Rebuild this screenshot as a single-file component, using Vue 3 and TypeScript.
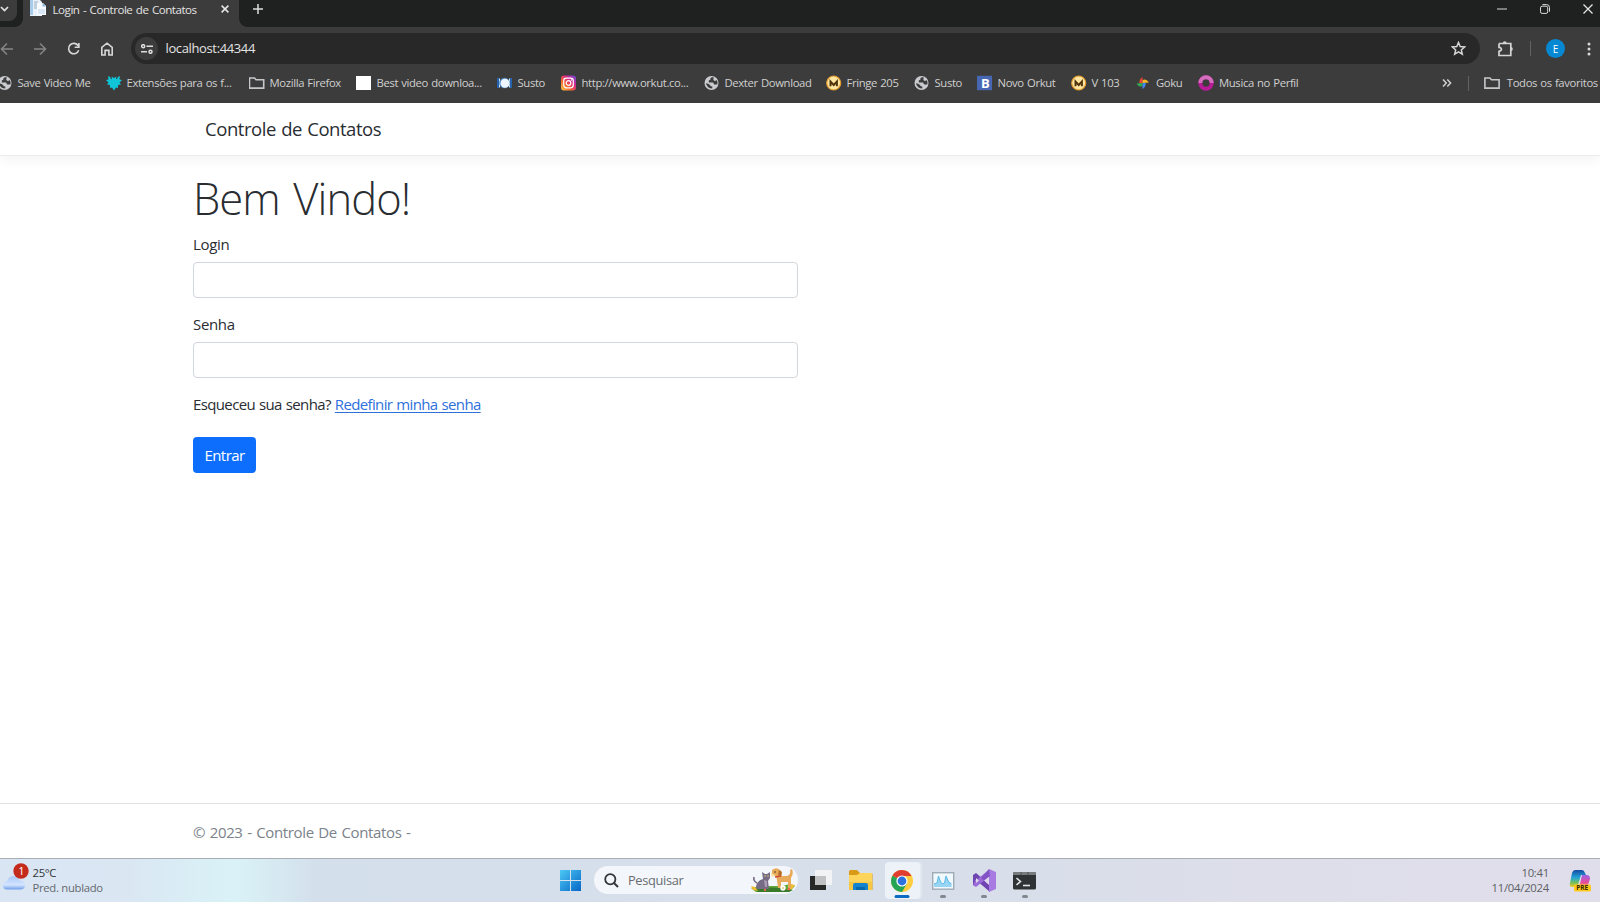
<script setup lang="ts">
interface Bookmark {
  label: string
  icon: string
  width: number
}

const bookmarks: Bookmark[] = [
  { label: 'Save Video Me', icon: 'globe', width: 109 },
  { label: 'Extensões para os f...', icon: 'puzzle', width: 143 },
  { label: 'Mozilla Firefox', icon: 'folder', width: 107 },
  { label: 'Best video downloa...', icon: 'blank', width: 141 },
  { label: 'Susto', icon: 'shake', width: 64 },
  { label: 'http://www.orkut.co...', icon: 'insta', width: 143 },
  { label: 'Dexter Download', icon: 'globe', width: 122 },
  { label: 'Fringe 205', icon: 'gold', width: 88 },
  { label: 'Susto', icon: 'globe', width: 63 },
  { label: 'Novo Orkut', icon: 'letter', width: 94 },
  { label: 'V 103', icon: 'gold', width: 64.5 },
  { label: 'Goku', icon: 'photos', width: 63 },
  { label: 'Musica no Perfil', icon: 'ring', width: 119.5 },
]
</script>

<template>
  <div class="screen">
    <header class="tabs">
      <div class="tab-search">
        <svg width="9" height="6" viewBox="0 0 9 6"><path d="M1 1l3.500 3.600L8 1" fill="none" stroke="#e3e3e3" stroke-width="1.700" /></svg>
      </div>
      <div class="tab">
        <svg class="favicon" width="16" height="16" viewBox="0 0 16 16">
          <path d="M0 0h10l2 2v14H0z" fill="#e9f2fa" /><path d="M0 0h3v15H0z" fill="#a7cbe9" />
          <path d="M4 2h4M4 4h4M4 6h3M4 8h3" stroke="#9aaec0" />
          <path d="M7 3h6l3 3v9H7z" fill="#f8fbff" /><path d="M8 9h7v5H8z" fill="#dae8f5" /><path d="M12.500 3l3.500 3.500h-3.500z" fill="#8ab8df" />
        </svg>
        <span class="tab-title">Login - Controle de Contatos</span>
        <svg class="tab-close" width="8" height="8" viewBox="0 0 8 8"><path d="M.6.6l6.800 6.800M7.400.6L.6 7.400" stroke="#e8e8e8" stroke-width="1.500" /></svg>
      </div>
      <svg class="plus" width="10" height="10" viewBox="0 0 10 10"><path d="M5 0v10M0 5h10" stroke="#dcdcdc" stroke-width="1.500" /></svg>
      <div class="window-buttons">
        <svg width="10" height="10" viewBox="0 0 10 10"><path d="M0 5h10" stroke="#d8d8d8" /></svg>
        <svg width="10" height="10" viewBox="0 0 10 10" fill="none" stroke="#d8d8d8"><rect x=".5" y="2.200" width="7.200" height="7.200" rx="1.600" /><path d="M2.400.6h4.200q2.900 0 2.900 2.900v4.200" /></svg>
        <svg width="10" height="10" viewBox="0 0 10 10"><path d="M.5.5l9 9M9.500.5l-9 9" stroke="#e8e8e8" stroke-width="1.200" /></svg>
      </div>
    </header>

    <div class="toolbar">
      <svg class="nav-icon dim" width="14" height="14" viewBox="0 0 14 14"><path d="M13 7H2M7 1.500L1.500 7 7 12.500" /></svg>
      <svg class="nav-icon dim" width="14" height="14" viewBox="0 0 14 14"><path d="M1 7h11M7 1.500L12.500 7 7 12.500" /></svg>
      <svg class="nav-icon" width="14" height="14" viewBox="0 0 14 14"><path d="M11.200 3.800A5.200 5.200 0 1 0 11.700 8.300M11.900 1v4.200H7.700" /></svg>
      <svg class="nav-icon" width="14" height="14" viewBox="0 0 14 14"><path d="M1.800 13V5.300L7 1.200l5.200 4.100V13H8.900V8.400H5.100V13z" /></svg>
      <div class="omnibox">
        <span class="site-info">
          <svg width="12" height="10" viewBox="0 0 12 10" fill="none" stroke="#dedede" stroke-width="1.500"><circle cx="2.200" cy="2.200" r="1.500" /><path d="M5.500 2.200H12M0 7.800h6" /><circle cx="9.500" cy="7.800" r="1.500" /></svg>
        </span>
        <span class="url">localhost:44344</span>
        <svg class="star" width="15" height="15" viewBox="0 0 15 15"><path d="M7.500 1.500l1.700 4.100 4.400.4-3.300 2.900 1 4.300-3.800-2.300-3.800 2.300 1-4.300L1.400 6l4.400-.4z" fill="none" stroke="#d5d5d5" stroke-width="1.500" /></svg>
      </div>
      <svg class="ext" width="17" height="17" viewBox="0 0 17 17"><path d="M2 3.500h11.800v4M13.800 10v5.500H2v-4.200q2.400-.4 2.400-2T2 7.400V3.500M13.800 7v4" fill="none" stroke="#d5d5d5" stroke-width="1.700" /><path d="M5.700 3.500a2 2.300 0 0 1 4 0zM13.800 7a2 2 0 0 1 0 4z" fill="#d5d5d5" /></svg>
      <span class="bar-divider"></span>
      <span class="avatar">E</span>
      <svg class="menu" width="4" height="14" viewBox="0 0 4 14" fill="#d8d8d8"><circle cx="2" cy="2" r="1.500" /><circle cx="2" cy="7" r="1.500" /><circle cx="2" cy="12" r="1.500" /></svg>
    </div>

    <div class="bookmarks">
      <div v-for="(mark, i) in bookmarks" :key="i" class="bookmark" :style="{ width: mark.width + 'px' }">
        <svg width="16" height="16" viewBox="0 0 16 16">
          <template v-if="mark.icon === 'globe'">
            <circle cx="7.500" cy="8" r="7" fill="#c9cbce" />
            <path d="M8.300 2.200q-2.400.4-1.800 2.400l-1.700 1v2h4.300l1 1.800h3.300q.7-2.500-.8-4.500-1.400 1.800-2.700.7Q8.500 4.500 10 2.600M1.900 8.300q2.500.1 4.100 1.600.4 1.600 2.300 1.700v1.700q-4.800.7-6.400-5z" fill="#3c3c3c" />
          </template>
          <path v-else-if="mark.icon === 'puzzle'" d="M2 1l2 1 1 2h1l-.5-2.500L8 3l2.500-1.500L10 4h1l1-2 2-1-.5 3.500L16 5l-2.500 2.500 1.500 2-3 .5v3l-2-.5-2 3-2-3-2 .5v-3l-3-.5 1.500-2L0 5l2.500-.5z" fill="#10c5d8" />
          <path v-else-if="mark.icon === 'folder'" d="M.3 3h5l1.600 1.800h7.600v8.300H.3z" fill="none" stroke="#c5c7ca" stroke-width="1.600" class="folder-shape" />
          <path v-else-if="mark.icon === 'blank'" d="M0 1h15v14H0z" fill="#fff" />
          <template v-else-if="mark.icon === 'shake'">
            <path d="M0 3h2v10H0zM13 3h2v10h-2z" fill="#2862ac" /><path d="M2.500 3.500v9M12.500 3.500v9" stroke="#cde2f6" />
            <circle cx="7.500" cy="8" r="5.300" fill="#4d8bc9" /><circle cx="8" cy="8.300" r="4.500" fill="#eef7ff" />
          </template>
          <template v-else-if="mark.icon === 'insta'">
            <defs>
              <linearGradient id="ig" x1="0" y1="1" x2="1" y2="0"><stop offset="0" stop-color="#ffd24b" /><stop offset=".35" stop-color="#f4652e" /><stop offset=".65" stop-color="#d6278b" /><stop offset="1" stop-color="#614cda" /></linearGradient>
            </defs>
            <rect y=".5" width="15" height="15" rx="3" fill="url(#ig)" /><rect x="2.700" y="3.200" width="9.600" height="9.600" rx="2.700" fill="none" stroke="#fff" stroke-width="1.200" /><circle cx="7.500" cy="8" r="2.300" fill="none" stroke="#fff" stroke-width="1.200" /><circle cx="10.500" cy="5" r=".7" fill="#fff" />
          </template>
          <template v-else-if="mark.icon === 'gold'">
            <circle cx="7.700" cy="8" r="7" fill="#ffe6a0" stroke="#e59b2c" stroke-width="1.200" /><path d="M4.500 11.200V6.500L7.700 10l3.200-3.500v4.700" fill="none" stroke="#51340d" stroke-width="2" />
          </template>
          <template v-else-if="mark.icon === 'letter'">
            <path d="M0 .8h15v14.400H0z" fill="#4867b2" /><text x="4" y="13" class="icon-letter">B</text>
          </template>
          <template v-else-if="mark.icon === 'photos'">
            <path d="M7.500 2v6H4.200Q4.200 4 7.500 2z" fill="#e84435" /><path d="M14 7.500Q11 3 7.500 5V8z" fill="#f2b526" /><path d="M7.500 14V8h3.300q0 4-3.300 6z" fill="#4285f4" /><path d="M1.500 8.500Q4 13 7.500 11V8z" fill="#34a853" />
          </template>
          <template v-else>
            <circle cx="8" cy="8" r="5.700" fill="none" stroke="#b91a98" stroke-width="4" /><path d="M2.300 8a5.700 5.700 0 0 1 11.400 0" fill="none" stroke="#d46dbd" stroke-width="4" />
          </template>
        </svg>
        <span>{{ mark.label }}</span>
      </div>
      <svg class="more" width="10" height="8" viewBox="0 0 10 8"><path d="M1 .5L4.300 4 1 7.500M5.300.5L8.600 4 5.300 7.500" fill="none" stroke="#d0d0d0" stroke-width="1.500" /></svg>
      <span class="bar-divider bookmark-divider"></span>
      <svg width="16" height="16" viewBox="0 0 16 16"><path d="M.9 3h5l1.600 1.800h7.600v8.300H.9z" fill="none" stroke="#c5c7ca" stroke-width="1.600" /></svg>
      <span class="all">Todos os favoritos</span>
    </div>

    <div class="page">
      <nav class="navbar"><a class="brand">Controle de Contatos</a></nav>
      <main class="content">
        <h1>Bem Vindo!</h1>
        <form @submit.prevent>
          <label for="login">Login</label>
          <input id="login" type="text" />
          <label for="password">Senha</label>
          <input id="password" type="password" />
          <p class="forgot"><span>Esqueceu sua senha?</span> <a>Redefinir minha senha</a></p>
          <button type="submit">Entrar</button>
        </form>
      </main>
      <footer>© 2023 - Controle De Contatos -</footer>
    </div>

    <div class="taskbar">
      <div class="weather">
        <svg width="27" height="28" viewBox="0 0 27 28">
          <defs><linearGradient id="cloud" x2="0" y2="1"><stop stop-color="#a9c9fa" /><stop offset=".65" stop-color="#d5e5ff" /><stop offset="1" stop-color="#6f9eea" /></linearGradient></defs>
          <path d="M4 26.500q-4-.2-4-4t4-4.200q1.500-5 6.500-5 4.500 0 6 4.200 5.500.2 5.500 4.800 0 4-4 4.200z" fill="url(#cloud)" />
          <circle cx="18" cy="8" r="7.700" fill="#c42b1c" /><text x="15.300" y="12" class="badge-text">1</text>
        </svg>
        <div class="weather-text"><strong>25°C</strong><span>Pred. nublado</span></div>
      </div>

      <div class="dock">
        <svg class="start" width="21" height="21" viewBox="0 0 21 21">
          <defs><linearGradient id="win" x2="1" y2="1"><stop stop-color="#4cc8f5" /><stop offset="1" stop-color="#0667c5" /></linearGradient></defs>
          <path d="M0 0h10v10H0zM11 0h10v10H11zM0 11h10v10H0zM11 11h10v10H11z" fill="url(#win)" />
        </svg>
        <div class="search">
          <svg width="15" height="15" viewBox="0 0 15 15"><circle cx="6.300" cy="6.300" r="5.100" fill="none" stroke="#343638" stroke-width="1.800" /><path d="M10 10l4 4" stroke="#343638" stroke-width="2" /></svg>
          <span>Pesquisar</span>
          <svg class="pets" width="46" height="25" viewBox="0 0 46 25">
            <path d="M1 20l5 4h33l6-6-5-2-8 2H10z" fill="#62a83a" /><path d="M4 22q18-5 39 0l-4 2H8z" fill="#397b2a" />
            <path d="M1 18l4 1 3 4-5-1zM41 16l4 1-3 4-5 1z" fill="#efbd31" />
            <path d="M4 9q-1 4 3 6" fill="none" stroke="#756b84" stroke-width="1.600" />
            <path d="M6 20q0-7 7-9l-1-7 3 2h2l3-2v6l-2 3 1 8H7z" fill="#756b84" /><path d="M14 12l3 1v6h-2z" fill="#a99bb2" />
            <circle cx="15" cy="8" r=".7" fill="#f7dc75" /><circle cx="18" cy="8" r=".7" fill="#f7dc75" />
            <path d="M22 2q5-4 9 1l1 5h5q4-1 3-6l2-1q2 5-1 9v10h-3v-6h-7v6h-3l-1-8-1-4-4-1z" fill="#e7ab5b" /><path d="M29 2l3 2-1 4-3-1z" fill="#b46d2b" /><path d="M21 5l4 2-2 2q-2-1-2-4z" fill="#fce0a0" /><circle cx="25" cy="4" r=".8" fill="#45301e" /><path d="M25 9l6-1" stroke="#ce4637" stroke-width="1.500" />
            <circle cx="33" cy="20" r="2.700" fill="#fff" /><circle cx="33" cy="20" r=".9" fill="#e5c55d" /><circle cx="15" cy="22" r="1.200" fill="#ef6550" /><circle cx="39" cy="21" r="1.200" fill="#ef6550" />
          </svg>
        </div>
        <div class="app">
          <svg width="22" height="22" viewBox="0 0 22 22"><path d="M0 6h16v14H0z" fill="#272929" /><rect x="5" y="0" width="17" height="15" rx="1" fill="#f2f3f4" /><path d="M5 6h11v9H5z" fill="#bfc1c3" /></svg>
        </div>
        <div class="app">
          <svg width="24" height="22" viewBox="0 0 24 22"><path d="M0 1.500Q0 0 1.500 0H8l3 3h11q1.500 0 1.500 1.500V20H0z" fill="#d99b17" /><path d="M0 5h8l3-2h12v17H0z" fill="#ffd45b" /><path d="M0 12h23v8H0z" fill="#f8c744" /><path d="M4 20v-5q0-2 2-2h11q2 0 2 2v5z" fill="#1683cf" /><path d="M7 17h9v3H7z" fill="#0868ac" /></svg>
        </div>
        <div class="app active">
          <svg width="24" height="24" viewBox="0 0 24 24">
            <circle cx="12" cy="12" r="11" fill="#ffcd3f" /><path d="M12 12L2.500 6.500A11 11 0 0 0 12 23l5-8.500z" fill="#24a454" /><path d="M12 12L2.500 6.500Q5.500 1 12 1t9.500 6H12z" fill="#e23d31" /><circle cx="12" cy="12" r="5.600" fill="#fff" /><circle cx="12" cy="12" r="4.400" fill="#2e72df" />
          </svg>
          <i class="indicator wide"></i>
        </div>
        <div class="app">
          <svg width="23" height="18" viewBox="0 0 23 18"><rect x=".7" y=".7" width="21" height="16.500" fill="#eff8fd" stroke="#9fabb5" stroke-width="1.400" /><path d="M2 15v-3l3-1 1.500-7 2 5 2 3 2-1 1.500-7 2.500 5 3 3v3z" fill="#98d5f5" /><path d="M2 12l3-1 1.500-7 2 6 2 2 2-1 1.500-7 2.500 6 3 2" fill="none" stroke="#5bb9e8" /></svg>
          <i class="indicator"></i>
        </div>
        <div class="app">
          <svg width="23" height="23" viewBox="0 0 23 23"><path d="M0 6l3-2 14 12v7L3 11l-1 1v5l-2-1z" fill="#7045b2" /><path d="M0 16l3 2L17 7V0L2 12z" fill="#9a6bd8" /><path d="M16 0l7 3v17l-7 3z" fill="#a77be2" /><path d="M16 7l-5 4.500 5 4.500z" fill="#e0daee" /><path d="M3 9l3 2.500L3 14z" fill="#e0daee" /><path d="M16 0l1 7-6 4.500-3-2.500z" fill="#8353c6" /></svg>
          <i class="indicator"></i>
        </div>
        <div class="app">
          <svg width="23" height="18" viewBox="0 0 23 18"><rect width="23" height="17.500" rx="1.500" fill="#303335" /><path d="M1.500 0h20Q23 0 23 3H0q0-3 1.500-3z" fill="#777b7e" /><path d="M8 0v3M15 0v3" stroke="#505456" /><path d="M3.500 6l4 3.500-4 3.500" fill="none" stroke="#e2e5e7" stroke-width="1.600" /><path d="M10 13.500h7" stroke="#e2e5e7" stroke-width="1.600" /></svg>
          <i class="indicator"></i>
        </div>
      </div>

      <div class="tray">
        <div class="clock"><span>10:41</span><span>11/04/2024</span></div>
        <svg width="22" height="22" viewBox="0 0 22 22">
          <defs>
            <linearGradient id="copA" x2="0" y2="1"><stop stop-color="#164ba4" /><stop offset=".45" stop-color="#22a4d6" /><stop offset=".75" stop-color="#75c05b" /><stop offset="1" stop-color="#f2c629" /></linearGradient>
            <linearGradient id="copB" x2="0" y2="1"><stop stop-color="#9b65e5" /><stop offset=".55" stop-color="#e54d9d" /><stop offset="1" stop-color="#ff8652" /></linearGradient>
          </defs>
          <path d="M6 0h7q2 0 3 3l1 2h-5L9 15q-1 2-4 2H3q-3 0-2-4L3 3q1-3 3-3z" fill="url(#copA)" /><path d="M13 5h5q3 0 3 4l-2 6q-1 3-4 3H8q2 0 3-4z" fill="url(#copB)" />
          <rect x="5" y="14.500" width="17" height="7" rx="1.500" fill="#ffc91f" /><text x="7.200" y="20.300" class="pre">PRE</text>
        </svg>
      </div>
    </div>
  </div>
</template>

<style>
body { overflow: hidden; }
</style>

<style scoped>
* { box-sizing: border-box; }
.screen { width: 1600px; height: 902px; display: flex; flex-direction: column; background: #fff; font-family: "Open Sans", "Noto Sans", sans-serif; overflow: hidden; }
svg { flex: none; display: block; }
.tabs { height: 27px; flex: none; display: flex; align-items: flex-start; background: #1f2120; }
.tab-search { width: 17px; height: 21px; flex: none; background: #3c3c3c; border-radius: 0 0 8px 0; padding: 6px 0 0; }
.tab { position: relative; display: flex; width: 216px; height: 27px; margin-left: 6px; padding-left: 7px; background: #3c3c3c; }
.tab::before, .tab::after { content: ''; position: absolute; bottom: 0; width: 8px; height: 8px; }
.tab::before { left: -8px; background: radial-gradient(circle at 0 0, transparent 7.500px, #3c3c3c 8px); }
.tab::after { right: -8px; background: radial-gradient(circle at 100% 0, transparent 7.500px, #3c3c3c 8px); }
.tab-title { width: 168px; margin-left: 6.500px; font-size: 11.600px; line-height: 19px; letter-spacing: -.480px; word-spacing: .9px; color: #e3e3e3; white-space: nowrap; }
.tab-close { margin: 5px 0 0 0; }
.plus { margin: 4px 0 0 14px; }
.window-buttons { display: flex; margin: 4px 7px 0 auto; gap: 33px; }
.toolbar { height: 43px; flex: none; display: flex; align-items: center; background: #3c3c3c; }
.nav-icon { margin-right: 20px; margin-left: -.5px; fill: none; stroke: #d8d8d8; stroke-width: 1.600; }
.nav-icon.dim { stroke: #858585; }
.omnibox { display: flex; align-items: center; width: 1349px; height: 31px; margin-left: -3px; border-radius: 16px; background: #282828; padding-left: 4px; }
.site-info { display: flex; align-items: center; justify-content: center; width: 23px; height: 23px; border-radius: 50%; background: #3c3c3c; }
.url { margin-left: 7.500px; margin-top: -1px; color: #e3e3e3; font-size: 13px; letter-spacing: -.370px; }
.star { margin: 0 14px 0 auto; }
.ext { margin-left: 17px; }
.bar-divider { width: 1px; height: 15px; flex: none; background: #626262; }
.toolbar .bar-divider { margin-left: 16px; }
.avatar { display: flex; align-items: center; justify-content: center; flex: none; width: 19px; height: 19px; margin-left: 15px; border-radius: 50%; color: #fff; background: #0788d2; font-size: 10px; }
.menu { margin-left: 22px; }
.bookmarks { height: 33px; flex: none; display: flex; align-items: center; padding: 0 0 7px; background: #3c3c3c; color: #d0d0d0; font-size: 11.300px; letter-spacing: -.360px; word-spacing: .6px; white-space: nowrap; }
.bookmark { display: flex; align-items: center; gap: 4.700px; flex: none; }
.bookmark span, .all { position: relative; top: -1px; }
.bookmark:first-child { margin-left: -3.200px; }
.icon-letter { font: bold 13px "Open Sans", sans-serif; fill: #fff; letter-spacing: 0; }
.folder-shape { transform: translateX(.2px); }
.more { margin-left: 124px; }
.bookmark-divider { margin: 0 15px 0 16px; }
.all { margin-left: 7px; }
.page { height: 755px; flex: none; display: flex; flex-direction: column; color: #292d32; font-size: 15px; }
.navbar { height: 53px; flex: none; padding: 12px 205px; border-bottom: 1px solid #ececed; box-shadow: 0 5px 12px rgba(0, 0, 0, .045); }
.brand { display: block; font-size: 18.500px; line-height: 27px; letter-spacing: -.450px; word-spacing: .9px; }
.content { padding: 17px 193px 0; }
h1 { margin: 0; font-size: 43.500px; font-weight: 300; line-height: 52px; letter-spacing: -.900px; word-spacing: 3px; }
form { width: 605px; }
label { display: block; height: 24px; margin: 7px 0 6px; line-height: 24px; letter-spacing: -.350px; }
label[for="password"] { margin-top: 14px; }
input { display: block; width: 605px; height: 36px; border: 1px solid #d1d6db; border-radius: 4px; background: #fff; outline: 0; padding: 5px 11px; font: inherit; }
.forgot { margin: 14px 0 21px; line-height: 24px; letter-spacing: -.630px; word-spacing: .7px; }
.forgot a { color: #2e70dc; text-decoration: underline; text-underline-offset: 2px; }
button { display: block; width: 63px; height: 36px; border: 0; border-radius: 4px; background: #0d6efd; color: #fff; font: 15px "Open Sans", sans-serif; letter-spacing: -.550px; padding: 0; }
footer { height: 55px; margin-top: auto; border-top: 1px solid #dfe1e4; padding: 16px 193px 0; color: #7b828a; line-height: 24px; letter-spacing: -.350px; word-spacing: 1px; }
.taskbar { height: 44px; flex: none; display: flex; align-items: stretch; border-top: 1px solid #a9aeb4; background: linear-gradient(90deg, #dae5f3 0, #dae7f3 130px, #d9f2f7 235px, #d3dfeb 320px, #d5dfeb 520px, #d8dfea 1000px, #dedeea 1300px, #e0deea 1600px); }
.weather { display: flex; width: 560px; padding: 4px 0 0 3px; }
.weather-text { display: flex; flex-direction: column; margin-left: 2.500px; font-size: 11.300px; letter-spacing: -.300px; line-height: 15px; color: #65696e; padding-top: 2px; }
.weather-text strong { font-weight: 400; color: #303438; }
.badge-text { font: 11px "Open Sans", sans-serif; fill: #fff; }
.dock { display: flex; }
.start { margin-top: 11px; }
.search { display: flex; align-items: center; width: 204px; height: 28px; margin: 7px 5px 0 13px; padding-left: 10px; border-radius: 14px; background: #f3f7fb; }
.search span { margin-left: 9px; color: #686c70; font-size: 12.800px; letter-spacing: -.330px; }
.pets { margin: 0 2px 0 auto; }
.app { position: relative; display: flex; align-items: center; justify-content: center; width: 35px; height: 37px; margin: 3px 5.900px 0 0; }
.app.active { border-radius: 4px; background: #edf1f8; box-shadow: 2px 0 0 #e2e8f0; }
.indicator { position: absolute; bottom: 1px; left: 50%; width: 6px; height: 3px; border-radius: 2px; transform: translateX(-50%); background: #83888e; }
.indicator.wide { width: 15px; background: #0b6ac2; }
.tray { display: flex; margin-left: auto; padding: 11px 9px 0 0; gap: 20px; }
.clock { display: flex; flex-direction: column; margin-top: -5px; text-align: right; font-size: 11.300px; line-height: 15px; letter-spacing: -.250px; color: #5d6065; }
.pre { font: bold 6.500px "Open Sans", sans-serif; fill: #332800; }
</style>
